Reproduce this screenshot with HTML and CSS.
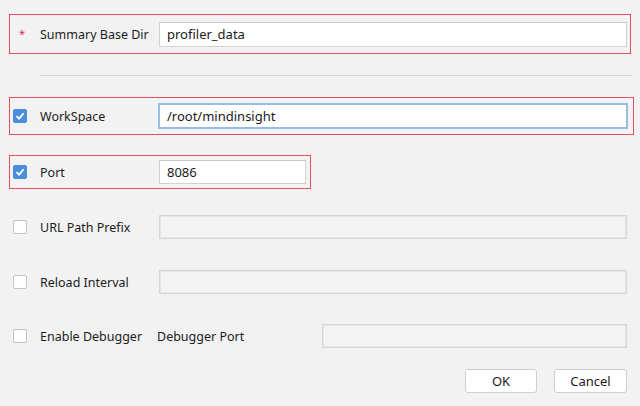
FILE: index.html
```html
<!DOCTYPE html>
<html>
<head>
<meta charset="utf-8">
<link rel="stylesheet" href="styles.css">
</head>
<body>
<div class="form">
  <div class="row r1 hl">
    <span class="mark star">*</span>
    <span class="label">Summary Base Dir</span>
    <div class="input wide h25">profiler_data</div>
  </div>
  <div class="sep"></div>
  <div class="row r2 hl w624">
    <span class="mark cb on"><svg viewBox="0 0 14 14" width="14" height="14"><path d="M3.5 7.2 L6 9.6 L10.6 4.4" fill="none" stroke="#fff" stroke-width="1.8"/></svg></span>
    <span class="label">WorkSpace</span>
    <div class="input focus">/root/mindinsight</div>
  </div>
  <div class="row r3 hl w302">
    <span class="mark cb on"><svg viewBox="0 0 14 14" width="14" height="14"><path d="M3.5 7.2 L6 9.6 L10.6 4.4" fill="none" stroke="#fff" stroke-width="1.8"/></svg></span>
    <span class="label">Port</span>
    <div class="input port">8086</div>
  </div>
  <div class="row r4">
    <span class="mark cb"></span>
    <span class="label">URL Path Prefix</span>
    <div class="input wide disabled"></div>
  </div>
  <div class="row r5">
    <span class="mark cb"></span>
    <span class="label">Reload Interval</span>
    <div class="input wide disabled"></div>
  </div>
  <div class="row r6">
    <span class="mark cb"></span>
    <span class="label">Enable Debugger</span>
    <span class="sublabel">Debugger Port</span>
    <div class="input dbg disabled"></div>
  </div>
  <div class="buttons">
    <button class="btn ok">OK</button>
    <button class="btn cancel">Cancel</button>
  </div>
</div>
</body>
</html>
```
FILE: styles.css
```css
html, body {
  margin: 0;
  padding: 0;
  background: #f2f2f2;
  width: 640px;
  height: 406px;
  overflow: hidden;
  font-family: "Noto Sans", "Open Sans", sans-serif;
  font-size: 12.5px;
  color: #1c1c1c;
}
.form {
  padding-left: 9px;
  padding-top: 14px;
}
.row {
  display: flex;
  align-items: center;
  box-sizing: border-box;
  width: 622px;
  border: 1px solid transparent;
}
.hl {
  border-color: #e0505e;
}
.w624 { width: 625px; }
.w302 { width: 302px; }
.r1 { height: 40px; }
.r2 { height: 38px; margin-top: 21px; }
.r3 { height: 34px; margin-top: 20px; }
.r4 { height: 34px; margin-top: 21px; }
.r5 { height: 34px; margin-top: 21px; }
.r6 { height: 34px; margin-top: 20px; }
.sep {
  margin-top: 21px;
  margin-left: 31px;
  width: 592px;
  height: 1px;
  background: #d9d9d9;
}
.mark {
  width: 14px;
  height: 14px;
  margin-left: 3px;
  flex: none;
  box-sizing: border-box;
}
.star {
  color: #e0304a;
  font-size: 11px;
  line-height: 14px;
  text-align: center;
  padding-left: 4px;
}
.cb {
  border: 1px solid #c4c4c4;
  border-radius: 2px;
  background: #fff;
}
.cb.on {
  border: none;
  background: #4a8edb;
}
.cb svg { display: block; }
.label {
  margin-left: 13px;
  width: 119px;
  flex: none;
  white-space: nowrap;
}
.sublabel {
  margin-left: -2px;
  width: 165px;
  flex: none;
  white-space: nowrap;
}
.input {
  box-sizing: border-box;
  height: 24px;
  border: 1px solid #d2d2d2;
  border-top-color: #c8c8c8;
  background: #fff;
  padding-left: 7px;
  display: flex;
  align-items: center;
  font-size: 13px;
  color: #1a1a1a;
}
.wide { width: 468px; }
.h25 { height: 25px; }
.focus {
  width: 470px;
  height: 26px;
  margin-left: -1px;
  border: 2px solid #97bde6;
  padding-left: 7px;
}
.port { width: 147px; }
.dbg { width: 305px; }
.disabled {
  background: #f3f3f3;
  border: 1px solid #d6d6d6;
  box-shadow: inset 0 0 0 1px #e6e6e6;
}
.buttons {
  display: flex;
  justify-content: flex-end;
  gap: 17px;
  width: 618px;
  margin-top: 16px;
}
.btn {
  box-sizing: border-box;
  height: 24px;
  background: #fff;
  border: 1px solid #cfcfcf;
  border-radius: 3px;
  font-family: "Noto Sans", "Open Sans", sans-serif;
  font-size: 13px;
  color: #1a1a1a;
  padding: 0;
}
.ok { width: 72px; }
.cancel { width: 73px; }
```
